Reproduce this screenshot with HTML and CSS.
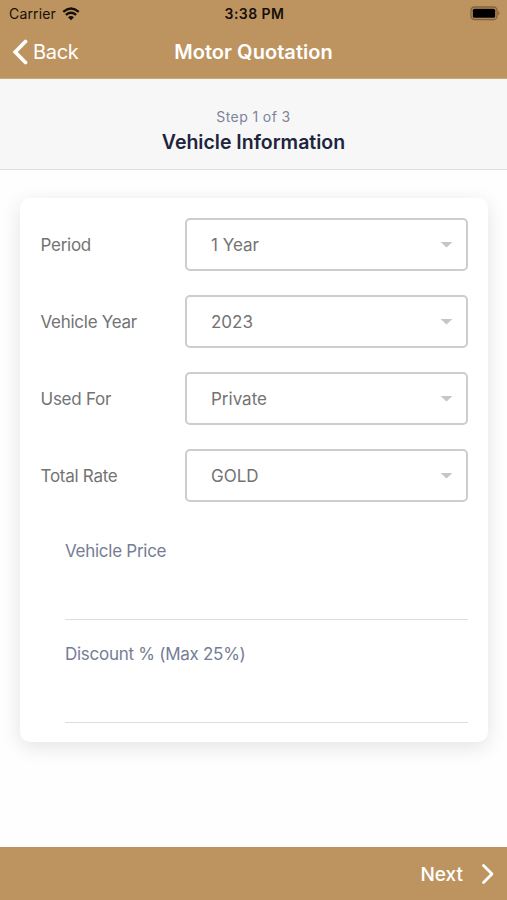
FILE: index.html
```html
<!DOCTYPE html>
<html lang="en">
<head>
<meta charset="utf-8">
<title>Motor Quotation</title>
<link rel="stylesheet" href="styles.css">
</head>
<body>
<div class="app">
  <header class="header">
    <div class="status">
      <div class="carrier"><span class="carrier-name">Carrier</span>
        <svg class="wifi" width="18" height="14" viewBox="0 0 19 15" fill="none" stroke="#15100a" stroke-width="2.5"><path d="M1.2 5.2Q9.5-2 17.8 5.2"/><path d="M4 8.4Q9.5 3.9 15 8.4"/><path d="M6.3 10.9Q9.5 8.6 12.7 10.9L9.5 14.3Z" fill="#15100a" stroke="none"/></svg>
      </div>
      <span class="time">3:38 PM</span>
      <svg class="battery" width="30" height="15" viewBox="0 0 30 15"><rect x="1" y="1" width="26" height="12.5" rx="3.6" fill="none" stroke="#80613b" stroke-width="1.3"/><rect x="2.8" y="2.8" width="22.4" height="8.9" rx="1.5" fill="#000"/><path d="M28.2 5Q30.6 7.2 28.2 9.4Z" fill="#80613b"/></svg>
    </div>
    <nav class="nav">
      <a class="back"><svg width="16" height="26" viewBox="0 0 16 26" fill="none" stroke="#fff" stroke-width="3.7" stroke-linecap="round" stroke-linejoin="miter"><path d="M13.5 2.5L3.2 13L13.5 23.5"/></svg><span class="back-text">Back</span></a>
      <h1 class="title">Motor Quotation</h1>
      <span></span>
    </nav>
  </header>
  <section class="step">
    <div class="step-count">Step 1 of 3</div>
    <h2 class="step-name">Vehicle Information</h2>
  </section>
  <main class="main">
    <form class="card">
      <div class="row"><span class="label">Period</span><div class="select"><span>1 Year</span><i class="caret"></i></div></div>
      <div class="row"><span class="label">Vehicle Year</span><div class="select"><span>2023</span><i class="caret"></i></div></div>
      <div class="row"><span class="label">Used For</span><div class="select"><span>Private</span><i class="caret"></i></div></div>
      <div class="row"><span class="label">Total Rate</span><div class="select"><span>GOLD</span><i class="caret"></i></div></div>
      <div class="field first"><span>Vehicle Price</span></div>
      <div class="field"><span>Discount % (Max 25%)</span></div>
    </form>
  </main>
  <footer class="footer">
    <span class="next">Next</span>
    <svg width="14" height="22" viewBox="0 0 14 22" fill="none" stroke="#fff" stroke-width="2.8" stroke-linecap="round" stroke-linejoin="round"><path d="M2.5 2.5L11 11L2.5 19.5"/></svg>
  </footer>
</div>
</body>
</html>
```

FILE: styles.css
```css
* { box-sizing: border-box; }
body { margin: 0; font-family: Inter, "Liberation Sans", sans-serif; background: #fefefe; }
.app { height: 900px; display: flex; flex-direction: column; overflow: hidden; }
h1, h2 { margin: 0; }
svg { display: block; flex: none; }
.header { height: 79px; background: #bd945f; border-bottom: 1px solid #c9a87d; }
.status { height: 27px; display: grid; grid-template-columns: 1fr auto 1fr; align-items: center; padding: 0 7px 0 9px; color: #15100a; }
.carrier { display: flex; align-items: center; gap: 6px; font-size: 14px; letter-spacing: .15px; }
.time { font-size: 14px; font-weight: 600; letter-spacing: .45px; }
.battery { justify-self: end; }
.nav { height: 50px; display: grid; grid-template-columns: 1fr auto 1fr; align-items: center; padding: 0 12px; color: #fff; }
.back { display: flex; align-items: center; gap: 5px; font-size: 20px; letter-spacing: -.3px; }
.title { font-size: 20px; font-weight: 600; letter-spacing: .05px; }
.step { height: 91px; padding-top: 28px; background: #f7f7f7; border-bottom: 1px solid #dedede; text-align: center; }
.step-count { font-size: 14px; line-height: 20px; letter-spacing: .4px; color: #7b849b; }
.step-name { font-size: 19.5px; line-height: 30px; font-weight: 600; color: #20243d; }
.main { flex: 1; padding: 28px 19px 0 20px; }
.card { height: 544px; padding: 20px 20px 0; background: #fff; border-radius: 10px; box-shadow: 0 5px 20px rgba(0, 0, 0, .11); }
.row { height: 53px; margin-bottom: 24px; display: flex; align-items: center; font-size: 17px; letter-spacing: -.27px; color: #737373; }
.label { width: 145px; padding-left: .5px; }
.select { flex: 1; height: 53px; display: flex; align-items: center; justify-content: space-between; padding: 0 13px 0 24px; letter-spacing: 0; border: 2px solid #cdcdcd; border-radius: 5px; }
.caret { width: 13px; height: 6px; background: #c6c6c6; clip-path: polygon(0 0, 100% 0, 50% 100%); }
.field { height: 103px; margin-left: 25px; padding-top: 22px; border-bottom: 1px solid #dedede; font-size: 17px; line-height: 24px; letter-spacing: -.27px; color: #757d96; }
.first { height: 94px; padding-top: 13px; }
.footer { height: 53px; display: flex; align-items: center; justify-content: flex-end; gap: 18px; padding: 1px 12px 0 0; background: #bd945f; color: #fff; font-size: 19px; font-weight: 500; }
```
